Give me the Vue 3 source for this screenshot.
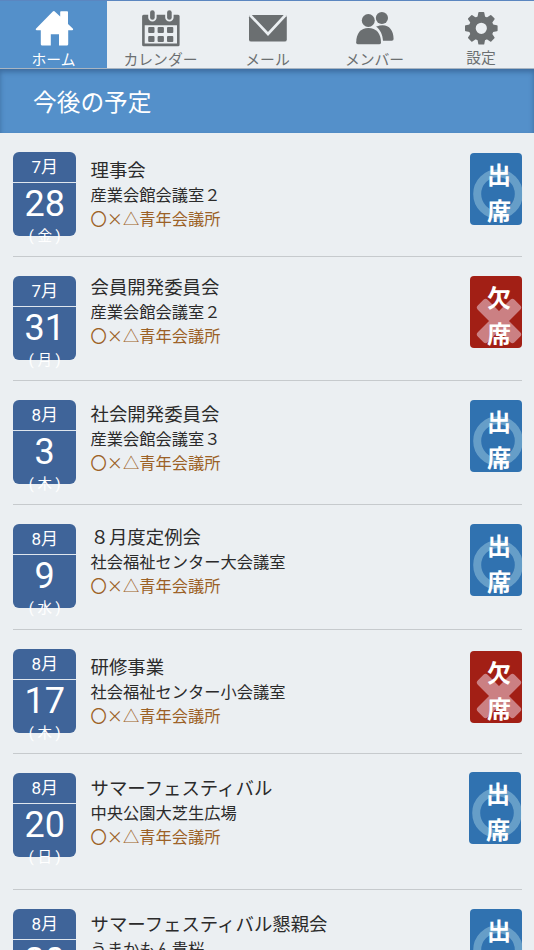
<script setup>
const tabs = [
  { id: 'home', label: 'ホーム' },
  { id: 'calendar', label: 'カレンダー' },
  { id: 'mail', label: 'メール' },
  { id: 'members', label: 'メンバー' },
  { id: 'settings', label: '設定' },
]

const org = '〇×△青年会議所'

const events = [
  { month: 7, day: 28, week: '金', title: '理事会', place: '産業会館会議室２', attend: true, height: 123, shift: 5, badge: 1 },
  { month: 7, day: 31, week: '月', title: '会員開発委員会', place: '産業会館会議室２', attend: false, height: 124, shift: -2, badge: 0 },
  { month: 8, day: 3, week: '木', title: '社会開発委員会', place: '産業会館会議室３', attend: true, height: 124, shift: 1, badge: 0 },
  { month: 8, day: 9, week: '水', title: '８月度定例会', place: '社会福祉センター大会議室', attend: true, height: 125, shift: 0, badge: 0 },
  { month: 8, day: 17, week: '木', title: '研修事業', place: '社会福祉センター小会議室', attend: false, height: 124, shift: 5, badge: 2 },
  { month: 8, day: 20, week: '日', title: 'サマーフェスティバル', place: '中央公園大芝生広場', attend: true, height: 136, shift: 2, badge: -1 },
  { month: 8, day: 20, week: '日', title: 'サマーフェスティバル懇親会', place: 'うまかもん貴桜', attend: true, height: 124, shift: 2, badge: 0 },
]
</script>

<template>
  <div class="screen">
    <nav class="tabs">
      <a v-for="t in tabs" :key="t.id" class="tab" :class="['tab-' + t.id, { active: t.id === 'home' }]">
        <svg class="icon" viewBox="0 0 40 40" width="40" height="40">
          <path v-if="t.id === 'home'" d="M20.5 3.2 L26.2 8.6 V4 Q26.2 3.2 27 3.2 H33.2 Q34 3.2 34 4 V16 L39 20.8 Q39.6 22 38.3 22.2 H34.2 V36.2 Q34.2 37.6 32.8 37.6 H25 V26.2 H16.8 V37.6 H8.2 Q6.8 37.6 6.8 36.2 V22.2 H2.6 Q1.2 22 1.9 20.8 L18.8 3.6 Q19.6 2.6 20.5 3.2 Z" />
          <g v-else-if="t.id === 'calendar'">
            <path fill-rule="evenodd" d="M2.6 6.8 H7.2 V9.4 A4.2 4.2 0 0 0 15.6 9.4 V6.8 H24.2 V9.4 A4.2 4.2 0 0 0 32.6 9.4 V6.8 H37.1 Q38.6 6.8 38.6 8.3 V36.7 Q38.6 38.2 37.1 38.2 H2.6 Q1.1 38.2 1.1 36.7 V8.3 Q1.1 6.8 2.6 6.8 Z M3.7 17.3 V35.5 H36 V17.3 Z" />
            <rect x="9.1" y="2.2" width="4.6" height="9.6" rx="2.3" />
            <rect x="26.1" y="2.2" width="4.6" height="9.6" rx="2.3" />
            <g v-for="y in [19, 28]" :key="y">
              <rect v-for="x in [7.2, 16.6, 26]" :key="x" :x="x" :y="y" width="6.3" height="6" rx="1" />
            </g>
          </g>
          <g v-else-if="t.id === 'mail'">
            <rect x="1" y="7" width="37.8" height="26.6" rx="2.2" />
            <path class="flap" d="M2 7 L20 26 L37.6 7" />
          </g>
          <g v-else-if="t.id === 'members'">
            <circle cx="26.9" cy="10" r="6.1" />
            <path d="M21.5 18.5 C31.5 14.5 38.6 20 38.6 31 Q38.6 32.7 36.8 32.7 H28 C27.6 26.5 25.5 22 21 18.5 Z" />
            <circle class="halo" cx="13.3" cy="12.5" r="7.4" />
            <circle cx="13.3" cy="12.5" r="6.5" />
            <path d="M1.2 34.4 C1.2 25.5 5.6 20 13.4 20 S26 25.5 26 34.4 Q26 36.3 24.1 36.3 H3.1 Q1.2 36.3 1.2 34.4 Z" />
          </g>
          <g v-else>
            <path v-for="a in [0, 45, 90, 135, 180, 225, 270, 315]" :key="a" :transform="`rotate(${a} 20.3 20.3)`" d="M16.3 10 L17.3 4.7 Q17.4 4 18.1 4 H22.5 Q23.2 4 23.3 4.7 L24.3 10 Z" />
            <circle class="gear" cx="20.3" cy="20.3" r="9" />
          </g>
        </svg>
        <span class="label">{{ t.label }}</span>
      </a>
    </nav>

    <header class="heading">今後の予定</header>

    <main class="list">
      <article v-for="(e, i) in events" :key="i" class="event" :style="{ height: e.height + 'px' }">
        <div class="date">
          <div class="month">{{ e.month }}月</div>
          <div class="day">{{ e.day }}</div>
          <div class="week">( {{ e.week }} )</div>
        </div>
        <div class="info" :style="{ marginTop: e.shift + 'px' }">
          <h2>{{ e.title }}</h2>
          <p>{{ e.place }}</p>
          <p class="org">{{ org }}</p>
        </div>
        <div class="badge" :class="{ absent: !e.attend }" :style="{ marginTop: e.badge + 'px', marginRight: (e.badge < 0 ? 1 : 0) + 'px' }">
          <svg class="mark" viewBox="0 0 50 50" width="50" height="50">
            <circle v-if="e.attend" cx="25" cy="25" r="20.8" />
            <g v-else class="cross">
              <rect x="-1" y="18" width="52" height="14" rx="3" transform="rotate(45 25 25)" />
              <rect x="-1" y="18" width="52" height="14" rx="3" transform="rotate(-45 25 25)" />
            </g>
          </svg>
          <span>{{ e.attend ? '出' : '欠' }}</span>
          <span>席</span>
        </div>
      </article>
    </main>
  </div>
</template>

<style>
body {
  background: #ebeff2;
}
</style>

<style scoped>
.screen {
  height: 950px;
  overflow: hidden;
  box-sizing: border-box;
  border-top: 1px solid #5b86c0;
  background: #ebeff2;
  color: #2b2b2b;
  font-family: Roboto, "Noto Sans CJK JP", sans-serif;
}
.tabs {
  display: grid;
  grid-template-columns: 107px 107px 107px 107px 106px;
  height: 68px;
  box-sizing: border-box;
  border-bottom: 1px solid #a9b5c2;
}
.tab {
  display: flex;
  flex-direction: column;
  align-items: center;
  padding-top: 7px;
  color: #6b6f71;
  height: 60px;
}
.tab.active {
  background: #5490ca;
  color: #fff;
}
.icon {
  display: block;
  flex: none;
  fill: currentColor;
}
.flap {
  fill: none;
  stroke: #ebeff2;
  stroke-width: 2.6;
}
.halo {
  fill: #ebeff2;
}
.gear {
  fill: none;
  stroke: currentColor;
  stroke-width: 6.8;
}
.label {
  font-size: 14.8px;
  line-height: 20px;
  margin-top: 2px;
}
.tab-settings .label {
  margin-top: 0;
}
.heading {
  height: 64px;
  padding-left: 33px;
  box-sizing: border-box;
  background: #5490ca;
  box-shadow: inset 0 3px 5px rgba(25, 55, 95, 0.4);
  color: #fff;
  font-size: 23.7px;
  line-height: 68px;
}
.list {
  padding: 1px 12px 0 13px;
}
.event {
  display: flex;
  align-items: flex-start;
  box-sizing: border-box;
  padding-top: 19px;
  border-bottom: 1px solid #c6cacd;
}
.event:first-child {
  padding-top: 18px;
}
.date {
  width: 63.4px;
  height: 84.4px;
  flex: none;
  border-radius: 6px;
  background: #3f6499;
  color: #fff;
  text-align: center;
}
.month {
  height: 30px;
  border-bottom: 1px solid #dfe6ee;
  font-size: 17px;
  line-height: 30px;
}
.day {
  font-size: 36px;
  line-height: 43px;
  height: 42px;
}
.week {
  font-size: 14.5px;
  line-height: 23px;
}
.info {
  flex: 1;
  padding-left: 14.2px;
  white-space: nowrap;
}
h2,
p {
  margin: 0;
  font-family: "Noto Sans CJK JP", sans-serif;
}
h2 {
  font-size: 18.4px;
  font-weight: 400;
  line-height: 25px;
}
p {
  font-size: 16.25px;
  line-height: 24px;
}
.org {
  color: #9c6126;
}
.badge {
  position: relative;
  display: flex;
  flex-direction: column;
  flex: none;
  box-sizing: border-box;
  width: 52px;
  height: 71.5px;
  padding: 5px 0 0 17px;
  border-radius: 4px;
  background: #3072b0;
  color: #fff;
  font-size: 24px;
  font-weight: 700;
  line-height: 36px;
}
.badge span {
  position: relative;
  height: 36px;
}
.absent {
  background: #a21f15;
}
.mark {
  position: absolute;
  left: 3px;
  top: 16px;
  fill: none;
  stroke: rgba(200, 235, 245, 0.36);
  stroke-width: 8;
}
.absent .mark {
  left: 4px;
  top: 20px;
  stroke: none;
}
.cross {
  fill: #f5e1f0;
  opacity: 0.5;
}
</style>
